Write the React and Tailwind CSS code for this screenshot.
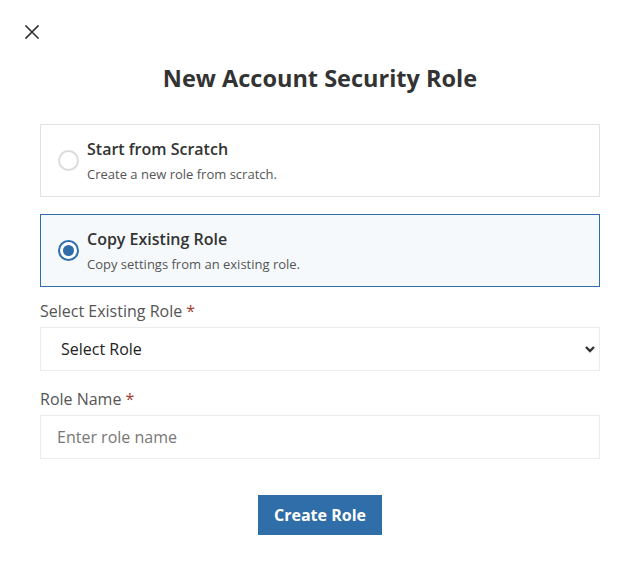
import React from "react";

export default function App() {
  return (
    <div className="w-[640px] h-[583px] bg-white relative" style={{ fontFamily: '"Open Sans", sans-serif' }}>
      <button className="absolute left-[24px] top-[24px] w-[16px] h-[16px] flex items-center justify-center text-[#333]">
        <svg width="16" height="16" viewBox="0 0 16 16" fill="none" stroke="#333" strokeWidth="1.6" strokeLinecap="square">
          <path d="M2 2 L14 14 M14 2 L2 14" />
        </svg>
      </button>
      <div className="pt-[62px] px-[40px]">
        <h1 className="text-center text-[23.5px] leading-[32px] font-bold text-[#333]">New Account Security Role</h1>
        <div className="mt-[30px] flex flex-col gap-[17px]">
          <div className="h-[73px] border border-[#e2e2e2] bg-white flex items-center pl-[17px] gap-[8px]">
            <div className="w-[21px] h-[21px] rounded-full border-2 border-[#dcdcdc] bg-white shrink-0"></div>
            <div className="flex flex-col">
              <div className="text-[16px] leading-[22px] font-semibold text-[#333] mt-[1px]">Start from Scratch</div>
              <div className="text-[13px] leading-[20px] text-[#555] mt-[4px]">Create a new role from scratch.</div>
            </div>
          </div>
          <div className="h-[73px] border border-[#2f6ea8] bg-[#f5f9fc] flex items-center pl-[17px] gap-[8px]">
            <div className="w-[21px] h-[21px] rounded-full border-2 border-[#2f6ea8] bg-white shrink-0 flex items-center justify-center">
              <div className="w-[11px] h-[11px] rounded-full bg-[#2f6ea8]"></div>
            </div>
            <div className="flex flex-col">
              <div className="text-[16px] leading-[22px] font-semibold text-[#333] mt-[1px]">Copy Existing Role</div>
              <div className="text-[13px] leading-[20px] text-[#555] mt-[4px]">Copy settings from an existing role.</div>
            </div>
          </div>
        </div>
        <div className="mt-[13px]">
          <div className="text-[16px] leading-[22px] text-[#555]">Select Existing Role <span className="text-[#a33a2e]">*</span></div>
          <div className="mt-[5px] h-[44px] border border-[#ececec] bg-white flex items-center justify-between pl-[20px] pr-[3px]">
            <span className="text-[16px] text-[#222]">Select Role</span>
            <svg width="12" height="12" viewBox="0 0 12 12" fill="none" stroke="#333" strokeWidth="2.4">
              <path d="M2 4 L6 8 L10 4" />
            </svg>
          </div>
        </div>
        <div className="mt-[17px]">
          <div className="text-[16px] leading-[22px] text-[#555]">Role Name <span className="text-[#a33a2e]">*</span></div>
          <div className="mt-[5px] h-[44px] border border-[#ececec] bg-white flex items-center pl-[16px]">
            <span className="text-[16px] text-[#777]">Enter role name</span>
          </div>
        </div>
        <div className="mt-[36px] flex justify-center">
          <button className="w-[124px] h-[40px] bg-[#2f6ea8] text-white text-[16px] font-bold">Create Role</button>
        </div>
      </div>
    </div>
  );
}
